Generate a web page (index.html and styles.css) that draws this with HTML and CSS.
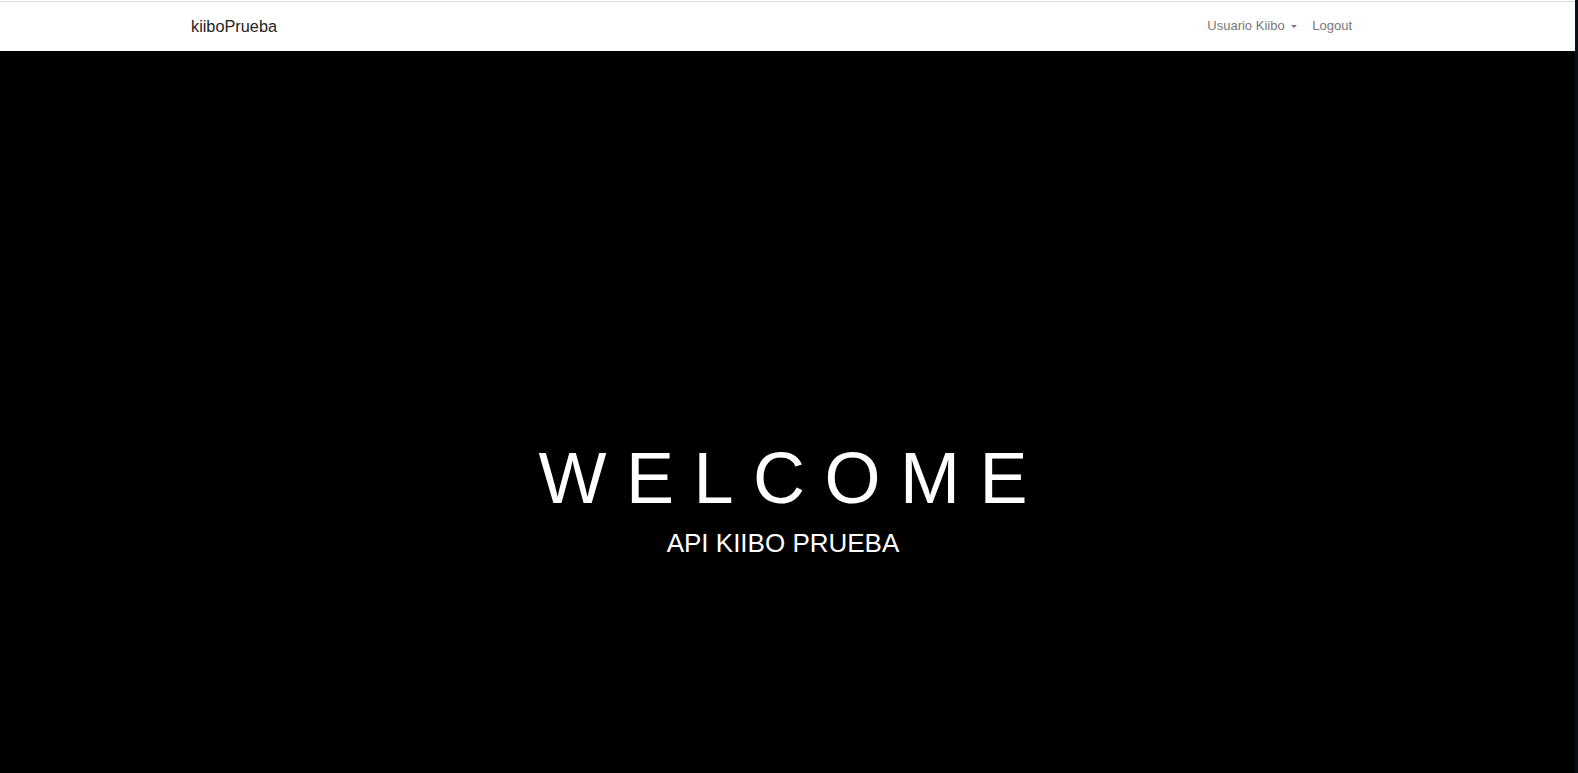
FILE: index.html
```html
<!DOCTYPE html>
<html lang="es">
<head>
<meta charset="utf-8">
<title>kiiboPrueba</title>
<link rel="stylesheet" href="styles.css">
</head>
<body>
<div class="page">
  <div class="main">
    <header class="header">
      <nav class="navbar">
        <a class="brand" href="#">kiiboPrueba</a>
        <ul class="nav">
          <li><a href="#">Usuario Kiibo <span class="caret"></span></a></li>
          <li><a href="#">Logout</a></li>
        </ul>
      </nav>
    </header>
    <section class="hero">
      <h1 class="title">WELCOME</h1>
      <p class="subtitle">API KIIBO PRUEBA</p>
    </section>
  </div>
  <div class="edge"></div>
</div>
</body>
</html>
```
FILE: styles.css
```css
* { box-sizing: border-box; }
html, body { margin: 0; padding: 0; height: 100%; }
body {
  font-family: "Liberation Sans", Arial, sans-serif;
  background: #000;
  overflow: hidden;
}
.page {
  display: flex;
  height: 773px;
}
.main {
  flex: 1;
  display: flex;
  flex-direction: column;
  background: #000;
}
.edge {
  width: 3px;
  background: #0b0f17;
}
.header {
  background: #fff;
  padding-top: 1px;
}
.navbar {
  height: 50px;
  background: #fff;
  border-top: 1px solid #dcdcdc;
  display: flex;
  align-items: center;
  justify-content: space-between;
  padding: 0 223px 2px 191px;
}
.brand {
  font-size: 16.3px;
  color: #222;
  text-decoration: none;
  line-height: 20px;
}
.nav {
  list-style: none;
  margin: 0;
  padding: 0;
  display: flex;
  gap: 15px;
}
.nav a {
  font-size: 13px;
  color: #777;
  text-decoration: none;
  line-height: 20px;
}
.caret {
  display: inline-block;
  width: 0;
  height: 0;
  margin-left: 3px;
  vertical-align: middle;
  border-top: 3px solid #777;
  border-left: 3px solid transparent;
  border-right: 3px solid transparent;
}
.hero {
  flex: 1;
  color: #fff;
  text-align: center;
  padding-top: 387px;
  padding-right: 9px;
}
.title {
  margin: 0;
  font-weight: normal;
  font-size: 72px;
  line-height: 80px;
  letter-spacing: 19.5px;
  text-indent: 19.5px;
}
.subtitle {
  margin: 10px 0 0;
  font-size: 26px;
  line-height: 30px;
}
```
